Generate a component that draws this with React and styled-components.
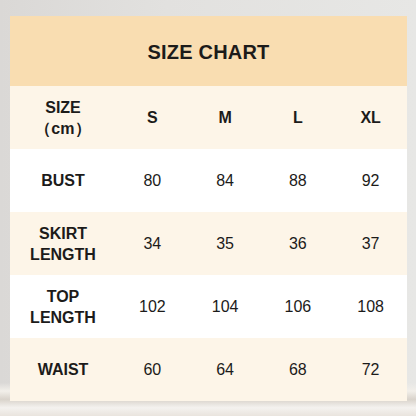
import React from "react";
import styled, { createGlobalStyle } from "styled-components";

const GlobalStyle = createGlobalStyle`
  html, body {
    margin: 0;
    padding: 0;
  }
  body {
    width: 416px;
    height: 416px;
    overflow: hidden;
    font-family: "Liberation Sans", Arial, sans-serif;
  }
`;

const Page = styled.div`
  width: 416px;
  height: 416px;
  box-sizing: border-box;
  padding: 16px 9px 16px 10px;
  background:
    linear-gradient(180deg, rgba(255,255,255,0) 0%, rgba(255,255,255,0) 92%, #f2efea 94%, #d9d3cb 96%, #f4f2ef 98%, #e9e4de 100%),
    linear-gradient(90deg, #dad8d6 0%, #e2e1df 40%, #e7e7e5 100%);
`;

const Chart = styled.div`
  display: grid;
  grid-template-columns: 106px repeat(4, 1fr);
  grid-template-rows: 70px repeat(5, 63px);
  width: 397px;
  color: #1c1b1a;
`;

const Title = styled.div`
  grid-column: 1 / -1;
  display: flex;
  align-items: center;
  justify-content: center;
  background: #f9ddb1;
  font-size: 20px;
  font-weight: 700;
  letter-spacing: 0.2px;
  padding-top: 2px;
`;

const Cell = styled.div`
  display: flex;
  align-items: center;
  justify-content: center;
  text-align: center;
  background: ${(p) => (p.$shade ? "#fdf5e8" : "#ffffff")};
  font-size: 16px;
  line-height: 21px;
  font-weight: ${(p) => (p.$bold ? 700 : 400)};
`;

const Unit = styled.span`
  font-weight: 600;
  letter-spacing: 0.3px;
`;

const rows = [
  { label: ["SIZE", "(cm)"], values: ["S", "M", "L", "XL"], bold: true },
  { label: ["BUST"], values: ["80", "84", "88", "92"] },
  { label: ["SKIRT", "LENGTH"], values: ["34", "35", "36", "37"] },
  { label: ["TOP", "LENGTH"], values: ["102", "104", "106", "108"] },
  { label: ["WAIST"], values: ["60", "64", "68", "72"] },
];

export default function App() {
  return (
    <>
      <GlobalStyle />
      <Page>
        <Chart>
          <Title>SIZE CHART</Title>
          {rows.map((row, i) => {
            const shade = i % 2 === 0;
            return (
              <React.Fragment key={i}>
                <Cell $shade={shade} $bold>
                  <span>
                    {row.label.map((l, j) => (
                      <React.Fragment key={j}>
                        {j > 0 && <br />}
                        {l === "(cm)" ? <Unit>（cm）</Unit> : l}
                      </React.Fragment>
                    ))}
                  </span>
                </Cell>
                {row.values.map((v) => (
                  <Cell key={v} $shade={shade} $bold={row.bold}>
                    {v}
                  </Cell>
                ))}
              </React.Fragment>
            );
          })}
        </Chart>
      </Page>
    </>
  );
}
